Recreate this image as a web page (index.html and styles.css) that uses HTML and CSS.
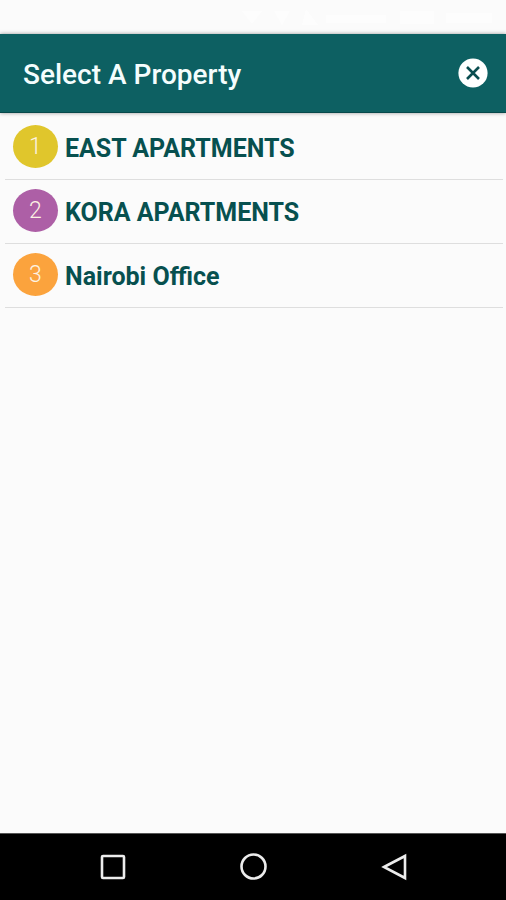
FILE: index.html
```html
<!DOCTYPE html>
<html lang="en">
<head>
  <meta charset="utf-8">
  <meta name="viewport" content="width=device-width, initial-scale=1">
  <title>Select A Property</title>
  <link rel="stylesheet" href="styles.css">
</head>
<body>
  <div class="status-bar" aria-hidden="true">
    <svg class="status-icons" viewBox="0 0 266 24">
      <path d="M2 6h20l-10 13zM34 6h16l-8 14zM66 4l12 16H62zM86 10h60v8H86zM160 6h34v13h-34zM206 8h46v10h-46z"/>
    </svg>
  </div>
  <header class="app-bar">
    <h1 class="title">Select A Property</h1>
    <button class="close" type="button" aria-label="Close">
      <svg viewBox="0 0 30 30">
        <circle class="disc" cx="15" cy="15" r="14.6"/>
        <path class="cross" d="M9 9l12 12M21 9l-12 12"/>
      </svg>
    </button>
  </header>
  <main class="content">
    <ul class="list">
      <li class="item"><a class="link" href="#east"><span class="badge yellow">1</span><span class="name">EAST APARTMENTS</span></a></li>
      <li class="item"><a class="link" href="#kora"><span class="badge purple">2</span><span class="name">KORA APARTMENTS</span></a></li>
      <li class="item"><a class="link" href="#nairobi"><span class="badge orange">3</span><span class="name">Nairobi Office</span></a></li>
    </ul>
  </main>
  <nav class="nav-bar">
    <button class="nav-button" type="button" aria-label="Recent apps">
      <svg viewBox="0 0 30 30"><rect x="5" y="4" width="22" height="22" rx="1"/></svg>
    </button>
    <button class="nav-button" type="button" aria-label="Home">
      <svg viewBox="0 0 30 30"><circle cx="15.5" cy="14.500" r="12"/></svg>
    </button>
    <button class="nav-button" type="button" aria-label="Back">
      <svg viewBox="0 0 30 30"><path d="M5 15L26 4V26z"/></svg>
    </button>
  </nav>
</body>
</html>
```

FILE: styles.css
```css
* {
  box-sizing: border-box;
}

body {
  margin: 0;
  min-height: 100vh;
  display: flex;
  flex-direction: column;
  background: #fbfbfb;
  font-family: Roboto, "Liberation Sans", sans-serif;
}

button {
  padding: 0;
  border: 0;
  background: none;
}

svg {
  display: block;
}

.status-bar {
  height: 34px;
  display: flex;
  justify-content: flex-end;
  align-items: center;
}

.status-icons {
  width: 266px;
  height: 24px;
  fill: #fdfdfd;
}

.app-bar {
  height: 79px;
  padding: 0 18px 0 23px;
  display: flex;
  align-items: center;
  justify-content: space-between;
  background: #0d6062;
  border-bottom: 1px solid #07494b;
  box-shadow: 0 0 4px rgba(0, 0, 0, 0.4);
}

.title {
  margin: 0;
  padding-top: 4px;
  font-size: 28px;
  line-height: 32px;
  font-weight: 500;
  color: #f4fdfd;
}

.close svg {
  width: 30px;
  height: 30px;
}

.disc {
  fill: #fff;
}

.cross {
  fill: none;
  stroke: #0a4d50;
  stroke-width: 2.6;
}

.content {
  flex: 1;
  padding: 3px 3px 0 5px;
}

.list {
  margin: 0;
  padding: 0;
  list-style: none;
}

.item {
  border-bottom: 1px solid #dedede;
}

.link {
  height: 63px;
  padding: 0 8px 2px;
  display: flex;
  align-items: center;
  gap: 7px;
  text-decoration: none;
}

.badge {
  width: 45px;
  height: 43px;
  border-radius: 50%;
  font-size: 23px;
  line-height: 43px;
  font-weight: 300;
  text-align: center;
  color: #fdf3e4;
}

.yellow {
  background: #e0c62c;
}

.purple {
  background: #ad5fa6;
}

.orange {
  background: #fba33d;
}

.name {
  padding-top: 5px;
  font-size: 25px;
  line-height: 32px;
  font-weight: 700;
  color: #07504f;
}

.nav-bar {
  height: 67px;
  padding: 0 42px;
  display: flex;
  align-items: center;
  justify-content: space-around;
  background: #000;
  border-top: 1px solid #555;
}

.nav-button svg {
  width: 30px;
  height: 30px;
  fill: none;
  stroke: #ececec;
  stroke-width: 2.6;
}
```
